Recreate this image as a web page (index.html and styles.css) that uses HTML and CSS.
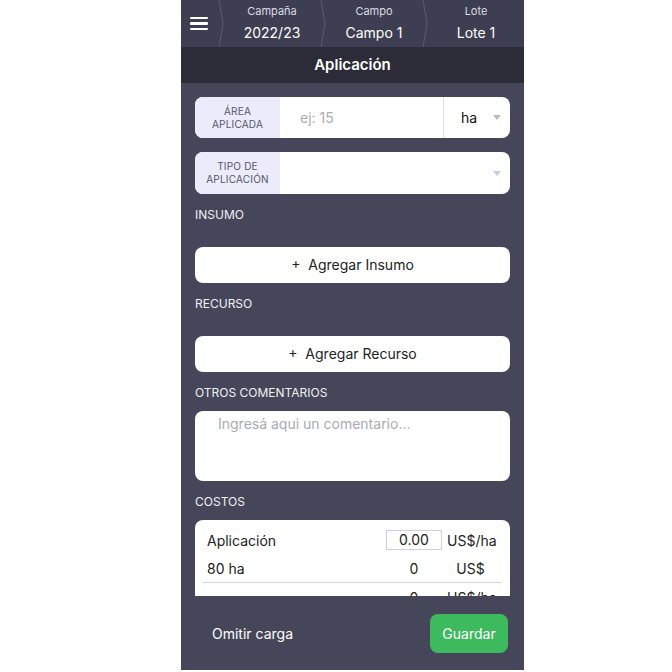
FILE: index.html
```html
<!DOCTYPE html>
<html lang="es">
<head>
    <meta charset="UTF-8">
    <meta name="viewport" content="width=device-width, initial-scale=1.0">
    <title>Aplicación</title>
    <link rel="stylesheet" href="styles.css">
</head>
<body>

    <div class="phone">
        <div class="topbar">
            <div class="menu">
                <span></span><span></span><span></span>
            </div>
            <div class="crumb">
                <svg class="chev" width="6" height="47" viewBox="0 0 6 47"><path d="M1 0 L5 23.5 L1 47" fill="none" stroke="#5c5c70" stroke-width="1"/></svg>
                <div class="crumb-text">
                    <div class="crumb-label">Campaña</div>
                    <div class="crumb-value">2022/23</div>
                </div>
            </div>
            <div class="crumb">
                <svg class="chev" width="6" height="47" viewBox="0 0 6 47"><path d="M1 0 L5 23.5 L1 47" fill="none" stroke="#5c5c70" stroke-width="1"/></svg>
                <div class="crumb-text">
                    <div class="crumb-label">Campo</div>
                    <div class="crumb-value">Campo 1</div>
                </div>
            </div>
            <div class="crumb">
                <svg class="chev" width="6" height="47" viewBox="0 0 6 47"><path d="M1 0 L5 23.5 L1 47" fill="none" stroke="#5c5c70" stroke-width="1"/></svg>
                <div class="crumb-text">
                    <div class="crumb-label">Lote</div>
                    <div class="crumb-value">Lote 1</div>
                </div>
            </div>
        </div>

        <div class="titlebar">Aplicación</div>

        <div class="content">
            <div class="field">
                <div class="field-label">Área<br>aplicada</div>
                <div class="field-input placeholder">ej: 15</div>
                <div class="field-unit">
                    <span>ha</span>
                    <span class="caret grey"></span>
                </div>
            </div>

            <div class="field second">
                <div class="field-label">Tipo de<br>aplicación</div>
                <div class="field-input"></div>
                <span class="caret lilac"></span>
            </div>

            <div class="section-label">INSUMO</div>
            <div class="add-btn">+&nbsp; Agregar Insumo</div>

            <div class="section-label">RECURSO</div>
            <div class="add-btn">+&nbsp; Agregar Recurso</div>

            <div class="section-label tight">OTROS COMENTARIOS</div>
            <div class="comment">Ingresá aqui un comentario...</div>

            <div class="section-label tight">COSTOS</div>
            <div class="costs">
                <div class="cost-row">
                    <div class="cost-name">Aplicación</div>
                    <div class="cost-box">0.00</div>
                    <div class="cost-unit">US$/ha</div>
                </div>
                <div class="cost-row">
                    <div class="cost-name">80 ha</div>
                    <div class="cost-val">0</div>
                    <div class="cost-unit center">US$</div>
                </div>
                <div class="cost-divider"></div>
                <div class="cost-row">
                    <div class="cost-name"></div>
                    <div class="cost-val">0</div>
                    <div class="cost-unit">US$/ha</div>
                </div>
            </div>
        </div>

        <div class="footer">
            <div class="skip">Omitir carga</div>
            <div class="save">Guardar</div>
        </div>
    </div>

</body>
</html>
```

FILE: styles.css
```css
body {
    margin: 0;
    padding: 0 0 0 181px;
    background-color: #fff;
    font-family: Inter, "Noto Sans", sans-serif;
}
.phone {
    width: 343px;
    height: 670px;
    background-color: #46465a;
    display: flex;
    flex-direction: column;
    color: #fff;
}
.topbar {
    height: 47px;
    background-color: #3e3e52;
    display: flex;
}
.menu {
    width: 37px;
    display: flex;
    flex-direction: column;
    justify-content: center;
    gap: 3px;
    padding-left: 9px;
    box-sizing: border-box;
}
.menu span {
    display: block;
    width: 18px;
    height: 2.5px;
    background: #fff;
    border-radius: 1px;
}
.crumb {
    flex: 1;
    display: flex;
}
.chev {
    flex: none;
}
.crumb-text {
    flex: 1;
    text-align: center;
}
.crumb-label {
    font-size: 11px;
    color: #dcdce4;
    margin-top: 5px;
    line-height: 13px;
}
.crumb-value {
    font-size: 14px;
    margin-top: 7px;
    line-height: 16px;
}
.titlebar {
    height: 36px;
    background-color: #2c2c38;
    text-align: center;
    line-height: 36px;
    font-size: 15px;
    font-weight: 600;
}
.content {
    flex: 1;
    overflow: hidden;
    padding: 14px 14px 0 14px;
}
.field {
    height: 41px;
    background: #fff;
    border-radius: 8px;
    display: flex;
    overflow: hidden;
    color: #222;
    align-items: stretch;
}
.field.second {
    height: 42px;
    margin-top: 14px;
}
.field-label {
    width: 85px;
    background: #ebebfa;
    font-size: 10px;
    line-height: 13px;
    text-transform: uppercase;
    color: #55556a;
    text-align: center;
    display: flex;
    align-items: center;
    justify-content: center;
    letter-spacing: 0.2px;
}
.field-input {
    flex: 1;
    display: flex;
    align-items: center;
    padding-left: 20px;
    font-size: 14px;
}
.placeholder {
    color: #ababb4;
}
.field-unit {
    width: 67px;
    border-left: 1px solid #dddde6;
    display: flex;
    align-items: center;
    padding-left: 17px;
    font-size: 14px;
    color: #111;
    box-sizing: border-box;
}
.field-unit span:first-child {
    flex: 1;
}
.caret {
    width: 0;
    height: 0;
    border-left: 4px solid transparent;
    border-right: 4px solid transparent;
    border-top: 5px solid #bbb;
    margin-right: 9px;
    align-self: center;
}
.caret.lilac {
    border-top-color: #c8c8e2;
}
.section-label {
    font-size: 12px;
    line-height: 14px;
    color: #f0f0f4;
    margin: 14px 0 25px 0;
}
.section-label.tight {
    margin: 14px 0 11px 0;
}
.add-btn {
    height: 36px;
    background: #fff;
    border-radius: 8px;
    color: #222;
    font-size: 14px;
    text-align: center;
    line-height: 36px;
}
.comment {
    height: 70px;
    background: #fff;
    border-radius: 8px;
    color: #ababb4;
    font-size: 14px;
    padding: 4px 0 0 23px;
    box-sizing: border-box;
}
.costs {
    background: #fff;
    border-radius: 8px 8px 0 0;
    color: #222;
    padding: 6px 8px 0 8px;
    height: 100px;
}
.cost-row {
    display: flex;
    align-items: center;
    height: 28px;
    font-size: 14px;
}
.cost-name {
    flex: 1;
    padding-left: 4px;
}
.cost-box {
    width: 54px;
    height: 18px;
    border: 1px solid #cfcfe6;
    text-align: center;
    line-height: 18px;
    font-size: 14px;
    margin-right: 5px;
}
.cost-val {
    width: 56px;
    text-align: center;
    margin-right: 5px;
}
.cost-unit {
    width: 55px;
}
.cost-unit.center {
    text-align: center;
    width: 47px;
    padding-right: 8px;
}
.cost-divider {
    height: 1px;
    background: #d4d4e4;
}
.footer {
    height: 74px;
    display: flex;
    align-items: center;
    justify-content: space-between;
    padding: 0 16px 0 31px;
}
.skip {
    font-size: 14px;
}
.save {
    background: #3dba5e;
    border-radius: 8px;
    width: 78px;
    height: 39px;
    line-height: 39px;
    text-align: center;
    font-size: 14px;
}
```
